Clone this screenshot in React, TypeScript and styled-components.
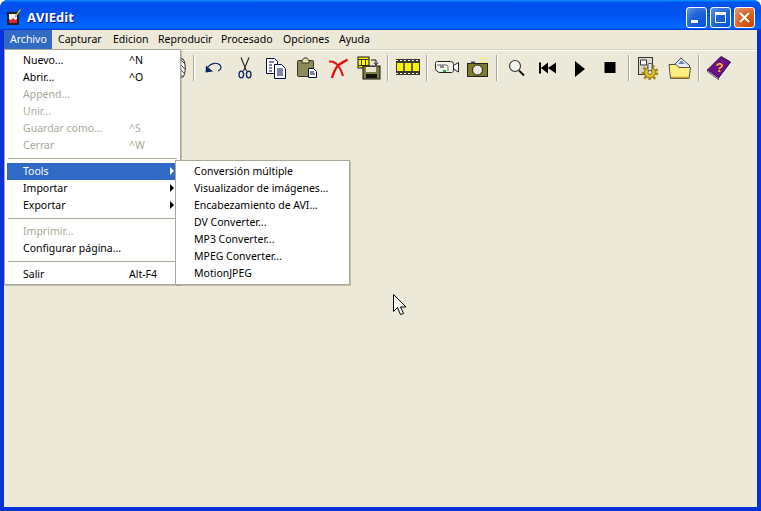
import React from 'react';
import styled, { createGlobalStyle } from 'styled-components';

const GlobalStyle = createGlobalStyle`
  html, body {
    margin: 0;
    padding: 0;
    background: #ffffff;
    overflow: hidden;
  }
  #root {
    width: 761px;
    height: 511px;
  }
`;

const Win = styled.div`
  position: relative;
  width: 761px;
  height: 511px;
  display: flex;
  flex-direction: column;
  border-radius: 8px 8px 0 0;
  overflow: hidden;
  background: #0831d9;
  font-family: "Noto Sans", "Liberation Sans", sans-serif;
  font-size: 10.5px;
  color: #000;
`;

const TitleBar = styled.div`
  height: 30px;
  flex: none;
  box-sizing: border-box;
  display: flex;
  align-items: center;
  padding: 4px 6px 0 7px;
  background: linear-gradient(180deg, #0997ff 0, #0053ee 8%, #0050ee 40%, #0066ff 88%, #0066ff 93%, #005bff 95%, #003dd7 96%, #003dd7 100%);
`;

const TitleText = styled.div`
  margin-left: 6px;
  font-family: "Open Sans", "DejaVu Sans", sans-serif;
  font-weight: 700;
  font-size: 13px;
  color: #fff;
  text-shadow: 1px 1px 0 #0f1089;
`;

const WinButtons = styled.div`
  margin-left: auto;
  display: flex;
  gap: 3px;
`;

const WinButton = styled.div<{ $close?: boolean }>`
  width: 21px;
  height: 21px;
  box-sizing: border-box;
  border: 1px solid #fff;
  border-radius: 3px;
  display: flex;
  align-items: center;
  justify-content: center;
  background: ${({ $close }) =>
    $close
      ? 'radial-gradient(circle at 85% 90%, #cc4600 0, #dc6527 55%, #e5a184 100%)'
      : 'radial-gradient(circle at 85% 90%, #0054e9 0, #2263d5 55%, #6696eb 100%)'};
`;

const Body = styled.div`
  flex: 1;
  min-height: 0;
  margin: 0 4px 4px;
  display: flex;
  flex-direction: column;
  background: #ece9d8;
`;

const MenuBar = styled.div`
  height: 19px;
  flex: none;
  display: flex;
  border-bottom: 1px solid #d8d4c0;
  box-shadow: 0 1px 0 #fff;
`;

const MenuTitle = styled.div<{ $active?: boolean; $w: number }>`
  width: ${({ $w }) => $w}px;
  flex: none;
  box-sizing: border-box;
  padding-left: 6px;
  line-height: 18px;
  white-space: nowrap;
  background: ${({ $active }) => ($active ? '#316ac5' : 'transparent')};
  color: ${({ $active }) => ($active ? '#fff' : '#000')};
`;

const Toolbar = styled.div`
  height: 34px;
  flex: none;
  display: flex;
  align-items: center;
  /* los botones anteriores quedan tapados por el menu */
  padding: 1px 0 0 155px;
`;

const ToolButton = styled.div`
  width: 31px;
  height: 26px;
  flex: none;
  display: flex;
  align-items: center;
  justify-content: center;
`;

const ToolSep = styled.div`
  width: 2px;
  height: 26px;
  flex: none;
  margin: 0 3px;
  background: linear-gradient(90deg, #aca899 50%, #fff 50%);
`;

const Menu = styled.div<{ $x: number; $y: number; $w: number; $h: number }>`
  position: absolute;
  left: ${({ $x }) => $x}px;
  top: ${({ $y }) => $y}px;
  width: ${({ $w }) => $w}px;
  height: ${({ $h }) => $h}px;
  box-sizing: border-box;
  padding: 2px;
  background: #fff;
  border: 1px solid #aca899;
  box-shadow: 1px 1px 0 rgba(120, 116, 100, 0.35);
`;

const Row = styled.div<{ $active?: boolean; $off?: boolean }>`
  height: 17px;
  box-sizing: border-box;
  padding: 0 0 2px 16px;
  display: flex;
  align-items: center;
  position: relative;
  white-space: nowrap;
  background: ${({ $active }) => ($active ? '#316ac5' : 'transparent')};
  color: ${({ $active, $off }) => ($active ? '#fff' : $off ? '#aca899' : '#000')};
`;

const Shortcut = styled.span`
  position: absolute;
  left: 122px;
`;

const Arrow = styled.span<{ $active?: boolean }>`
  position: absolute;
  right: 4px;
  top: 4px;
  width: 0;
  height: 0;
  border-style: solid;
  border-width: 4px 0 4px 4px;
  border-color: transparent transparent transparent ${({ $active }) => ($active ? '#fff' : '#000')};
`;

const MenuSep = styled.div`
  height: 2px;
  margin: 4px 1px 3px;
  background: linear-gradient(180deg, #aca899 50%, #fff 50%);
`;

const Cursor = styled.svg`
  position: absolute;
  left: 393px;
  top: 294px;
`;

const ico = { width: 24, height: 24, viewBox: '0 0 24 24' };

const AppIcon = () => (
  <svg width="14" height="18" viewBox="0 0 14 18">
    <rect x="0" y="4" width="12" height="13" fill="#222" />
    <rect x="2" y="6" width="8" height="9" fill="#f4f0f0" />
    <path d="M2 15v-4l2 1 2-2 2 2 2-1v4z" fill="#d8243c" />
    <path d="M8 8 13 1l1 1-5 7z" fill="#e8d060" stroke="#553" strokeWidth=".4" />
  </svg>
);

const Hatched = () => (
  <svg {...ico}>
    <path d="M6 3h14c3 4 3 14 0 18H6z" fill="#fff" stroke="#222" />
    <path d="M18 4l4 4M17 8l5 5M17 13l5 5M17 18l3 3" stroke="#555" />
  </svg>
);

const Undo = () => (
  <svg {...ico}>
    <path d="M6 11c3-4 9-5 12-2 2 2 1 5-2 6" fill="none" stroke="#0a246a" strokeWidth="1.2" />
    <path d="M3.500 16.500 4 9.500l7 6z" fill="#0a246a" />
  </svg>
);

const Scissors = () => (
  <svg {...ico}>
    <path d="M8 1.500 13.500 15M16 1.500 10.500 15" fill="none" stroke="#222" strokeWidth="1.1" />
    <ellipse cx="8.300" cy="18.500" rx="2.300" ry="3.300" fill="none" stroke="#0a246a" strokeWidth="1.300" />
    <ellipse cx="15.700" cy="18.500" rx="2.300" ry="3.300" fill="none" stroke="#0a246a" strokeWidth="1.300" />
  </svg>
);

const Copy = () => (
  <svg {...ico}>
    <path d="M2.500 2.500h8l3 3v12h-11z" fill="#fff" stroke="#000a50" />
    <path d="M10.500 8.500h7l4 4v10h-11z" fill="#fff" stroke="#000a50" />
    <path d="M5 6h5M5 9h3M5 12h3M5 15h3M13 13h6M13 15h6M13 17h6M13 19h6" stroke="#000a50" />
  </svg>
);

const Paste = () => (
  <svg {...ico}>
    <rect x="2.500" y="4.500" width="16" height="16" rx="1" fill="#8c8a58" stroke="#333" />
    <path d="M7 5c0-2 2-2 2-3h3c0 1 2 1 2 3v2H7z" fill="#e8e0a0" stroke="#333" />
    <path d="M13.500 12.500h5l3 3v6h-8z" fill="#fff" stroke="#000a50" />
    <path d="M15 16h4M15 18h5" stroke="#000a50" />
  </svg>
);

const Delete = () => (
  <svg {...ico}>
    <path d="M3 5.500c4-.5 7 1.500 9 4 2.500 3 4 6.500 5 10.500" fill="none" stroke="#e81010" strokeWidth="2" />
    <path d="M21.500 3.500c-3.500 2.500-7 3.500-9.500 6-2.500 3-4.500 7-6 12.500" fill="none" stroke="#e81010" strokeWidth="2.400" />
  </svg>
);

const FilmSave = () => (
  <svg {...ico}>
    <rect x="1" y="1" width="11" height="11" fill="#fff200" stroke="#111" />
    <path d="M1 3.500h11M1 9.500h11M4.500 3.500v6M8.500 3.500v6" stroke="#333" />
    <path d="M14 4h5v4M17 6.500l2 2.500 2-2.500" fill="none" stroke="#111" />
    <rect x="6" y="10" width="17" height="13" fill="#807c40" stroke="#111" />
    <rect x="9" y="11" width="10" height="5" fill="#e8e4d0" />
    <rect x="9" y="18" width="11" height="4" fill="#111" />
  </svg>
);

const Film = () => (
  <svg {...ico}>
    <rect x="0" y="3" width="24" height="16" fill="#3a3a2a" />
    <path d="M0 4.500h24M0 17.500h24" stroke="#fff" strokeDasharray="2 2" />
    <rect x="1" y="7" width="22" height="8" fill="#fff200" />
    <path d="M8 7v8M16 7v8" stroke="#333" strokeWidth="1.500" />
  </svg>
);

const Camcorder = () => (
  <svg {...ico}>
    <path d="M.500 7.500c0-2 1-2 2-2h13c2 0 3 1 3 3v6c0 1-1 2-2 2H5c-2 0-4.500-2-4.500-4z" fill="#f4f4e8" stroke="#222" />
    <path d="M2 9h9c2 0 2 1 2 3v3" fill="none" stroke="#666" />
    <rect x="5" y="9" width="4" height="3" fill="#889" />
    <rect x="8" y="14" width="3" height="2" fill="#22b14c" />
    <path d="M18.500 9.500l5-3v9.500l-5-3z" fill="#fff" stroke="#222" />
  </svg>
);

const Camera = () => (
  <svg {...ico}>
    <path d="M14 3h2l1-2 1 2h3M13 6h8" fill="none" stroke="#f0f050" />
    <rect x="1.500" y="7.500" width="20" height="13" fill="#7d7a28" stroke="#222" />
    <rect x="5" y="5.500" width="4" height="2" fill="#444" />
    <circle cx="11.500" cy="14" r="5" fill="#e8e8e0" stroke="#222" />
  </svg>
);

const Zoom = () => (
  <svg {...ico}>
    <circle cx="10" cy="10" r="5.500" fill="#f4f4ee" stroke="#333" strokeWidth="1.100" />
    <path d="M14 14.500l5 5" stroke="#111" strokeWidth="1.800" />
  </svg>
);

const Rewind = () => (
  <svg {...ico}>
    <path d="M3 6.500h2v11H3zM5 12l7-5.500v11zM12 12l8-5.500v11z" fill="#000" />
  </svg>
);

const Play = () => (
  <svg {...ico}>
    <path d="M8 5l10 8-10 8z" fill="#000" />
  </svg>
);

const Stop = () => (
  <svg {...ico}>
    <rect x="6.500" y="6" width="11" height="11" fill="#000" />
  </svg>
);

const Settings = () => (
  <svg {...ico}>
    <rect x="1.500" y="1.500" width="14" height="17" fill="#d8d8d0" stroke="#333" />
    <path d="M3.500 4h6v5h-6z" fill="#fff" stroke="#333" />
    <circle cx="13" cy="16.500" r="7" fill="none" stroke="#a88a08" strokeWidth="2.500" strokeDasharray="2.500 2.500" />
    <circle cx="13" cy="16.500" r="5.500" fill="#e0c020" stroke="#5a4a00" strokeWidth=".7" />
    <circle cx="13" cy="16.500" r="2" fill="#ece9d8" stroke="#5a4a00" strokeWidth=".7" />
    <rect x="11" y="7.500" width="4" height="7" rx="1" fill="#e8e8e0" stroke="#555" />
  </svg>
);

const Folder = () => (
  <svg {...ico}>
    <path d="M5 10l8-8 9 8-3 3z" fill="#e8eef8" stroke="#445" />
    <path d="M10 8l3.500-3.500L17 8z" fill="#6a80b8" />
    <path d="M1 8.500h7l3 3h11.500l-1.500 11H2.500z" fill="#fff080" stroke="#554" />
    <path d="M3 21.500h18" stroke="#c0a020" strokeWidth="1.500" />
  </svg>
);

const HelpBook = () => (
  <svg {...ico}>
    <path d="M.500 14 14 .500l9.500 5.500-12 16z" fill="#6e1088" stroke="#2a0040" />
    <path d="M.500 14l11 8v1.500L.500 15.500z" fill="#f0e8f0" stroke="#2a0040" strokeWidth=".7" />
    <text x="8.500" y="16" fontFamily="'Liberation Sans', sans-serif" fontWeight="bold" fontSize="13" fill="#f0c020">?</text>
  </svg>
);

const menus = [
  ['Archivo', 48],
  ['Capturar', 55],
  ['Edicion', 45],
  ['Reproducir', 63],
  ['Procesado', 62],
  ['Opciones', 56],
  ['Ayuda', 50],
] as const;

const tools = [
  [Undo, Scissors, Copy, Paste, Delete, FilmSave],
  [Film],
  [Camcorder, Camera],
  [Zoom, Rewind, Play, Stop],
  [Settings, Folder],
  [HelpBook],
];

const subItems = [
  'Conversión múltiple',
  'Visualizador de imágenes...',
  'Encabezamiento de AVI...',
  'DV Converter...',
  'MP3 Converter...',
  'MPEG Converter...',
  'MotionJPEG',
];

const App: React.FC = () => {
  return (
    <>
      <GlobalStyle />
      <Win>
        <TitleBar>
          <AppIcon />
          <TitleText>AVIEdit</TitleText>
          <WinButtons>
            <WinButton>
              <svg width="13" height="13" viewBox="0 0 13 13">
                <rect x="1" y="9" width="7" height="3" fill="#fff" />
              </svg>
            </WinButton>
            <WinButton>
              <svg width="13" height="13" viewBox="0 0 13 13">
                <path d="M1.500 3.500h10v8h-10z" fill="none" stroke="#fff" />
                <rect x="1" y="1" width="11" height="2" fill="#fff" />
              </svg>
            </WinButton>
            <WinButton $close>
              <svg width="13" height="13" viewBox="0 0 13 13">
                <path d="M2 2l9 9M11 2l-9 9" stroke="#fff" strokeWidth="2" />
              </svg>
            </WinButton>
          </WinButtons>
        </TitleBar>
        <Body>
          <MenuBar>
            {menus.map(([label, w], i) => (
              <MenuTitle key={label} $w={w} $active={i === 0}>{label}</MenuTitle>
            ))}
          </MenuBar>
          <Toolbar>
            <ToolButton><Hatched /></ToolButton>
            {tools.map((group, i) => (
              <React.Fragment key={i}>
                <ToolSep />
                {group.map((Icon, j) => (
                  <ToolButton key={j}><Icon /></ToolButton>
                ))}
              </React.Fragment>
            ))}
          </Toolbar>
        </Body>

        <Menu $x={4} $y={49} $w={177} $h={236}>
          <Row>Nuevo...<Shortcut>^N</Shortcut></Row>
          <Row>Abrir...<Shortcut>^O</Shortcut></Row>
          <Row $off>Append...</Row>
          <Row $off>Unir...</Row>
          <Row $off>Guardar como...<Shortcut>^S</Shortcut></Row>
          <Row $off>Cerrar<Shortcut>^W</Shortcut></Row>
          <MenuSep />
          <Row $active>Tools<Arrow $active /></Row>
          <Row>Importar<Arrow /></Row>
          <Row>Exportar<Arrow /></Row>
          <MenuSep />
          <Row $off>Imprimir...</Row>
          <Row>Configurar página...</Row>
          <MenuSep />
          <Row>Salir<Shortcut>Alt-F4</Shortcut></Row>
        </Menu>

        <Menu $x={175} $y={160} $w={175} $h={125}>
          {subItems.map((s) => (
            <Row key={s}>{s}</Row>
          ))}
        </Menu>

        <Cursor width="14" height="22" viewBox="0 0 14 22">
          <path d="M.500.500v17l4-4 3 7 3-1-3-6.500h5.500z" fill="#fff" stroke="#000" />
        </Cursor>
      </Win>
    </>
  );
};

export default App;
